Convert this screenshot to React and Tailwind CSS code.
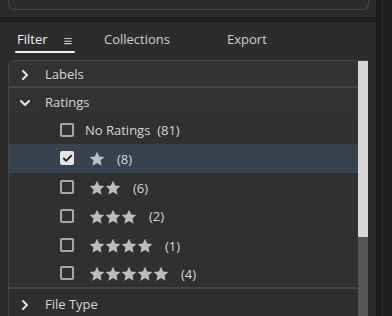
import { ChevronRight, ChevronDown, Check } from "lucide-react"

const Star = () => (
  <svg viewBox="0 0 24 24" className="w-[16px] h-[16px]" fill="#bdbdbd">
    <path d="M12 1l3.3 7.2 7.7.8-5.8 5.2 1.7 7.8L12 18l-6.9 4 1.7-7.8L1 9l7.7-.8z" />
  </svg>
)

const Box = ({ checked }) =>
  checked ? (
    <div className="w-[14px] h-[14px] rounded-[2px] bg-[#e6e6e6] flex items-center justify-center">
      <Check className="w-[11px] h-[11px] text-[#222]" strokeWidth={4} />
    </div>
  ) : (
    <div className="w-[14px] h-[14px] rounded-[2px] border-2 border-[#a8a8a8]" />
  )

const ratings = [
  { stars: 1, count: 8, checked: true, h: "h-[30px]" },
  { stars: 2, count: 6, h: "h-[29px]" },
  { stars: 3, count: 2, h: "h-[30px]" },
  { stars: 4, count: 1, h: "h-[30px]" },
  { stars: 5, count: 4, h: "h-[28px]" },
]

export default function App() {
  return (
    <div
      className="w-[392px] h-[316px] bg-[#1e1e1e] flex overflow-hidden text-[13px] text-[#d6d6d6]"
      style={{ fontFamily: '"Segoe UI", "Open Sans", "Noto Sans", sans-serif' }}
    >
      <div className="w-[376px] flex flex-col">
        {/* top panel (cut off) */}
        <div className="h-[17px] bg-[#2b2b2b] pl-2 pr-[7px]">
          <div className="h-[10px] border-x border-b border-[#454545] rounded-b-[6px] bg-[#2c2c2c]" />
        </div>
        <div className="h-[5px]" />

        {/* filter panel */}
        <div className="flex-1 bg-[#2c2c2c] flex flex-col min-h-0">
          <div className="h-[38px] flex items-start pt-[9px] pl-[15px]">
            <div className="flex flex-col">
              <div className="flex items-center h-[18px] text-[#efefef] text-[13px] pl-[2px]">
                <span>Filter</span>
                <span className="ml-[16px] text-[#c8c8c8] text-[15px] leading-none">≡</span>
              </div>
              <div className="h-[2px] w-[60px] bg-[#f0f0f0] mt-[2px] rounded-full" />
            </div>
            <span className="ml-[29px] text-[13px] text-[#cfcfcf] h-[18px] flex items-center">Collections</span>
            <span className="ml-[57px] text-[13px] text-[#cfcfcf] h-[18px] flex items-center">Export</span>
          </div>

          <div className="flex-1 ml-2 mr-2 flex border-t border-l border-[#454545] rounded-tl-[6px] bg-[#303030] min-h-0">
            <div className="flex-1 flex flex-col">
              <div className="h-[28px] pt-[2px] flex items-center bg-[#323232] border-b-2 border-[#444]">
                <ChevronRight className="w-[16px] h-[16px] ml-[8px] text-[#e6e6e6]" strokeWidth={3} />
                <span className="ml-[12px]">Labels</span>
              </div>
              <div className="h-[28px] pt-[2px] flex items-center bg-[#323232]">
                <ChevronDown className="w-[16px] h-[16px] ml-[8px] text-[#e6e6e6]" strokeWidth={3} />
                <span className="ml-[12px]">Ratings</span>
              </div>
              <div className="h-[29px] flex items-center pl-[51px]">
                <Box />
                <span className="ml-[11px] mt-[2px]">No Ratings&nbsp; (81)</span>
              </div>
              {ratings.map((r) => (
                <div
                  key={r.stars}
                  className={`${r.h} flex items-center pl-[51px] ${r.checked ? "bg-[#374150]" : ""}`}
                >
                  <Box checked={r.checked} />
                  <div className="flex ml-[15px] mt-[2px]">
                    {Array.from({ length: r.stars }).map((_, i) => (
                      <Star key={i} />
                    ))}
                  </div>
                  <span className="ml-[12px] mt-[3px]">({r.count})</span>
                </div>
              ))}
              <div className="h-[2px] bg-[#444]" />
              <div className="h-[28px] pt-[5px] flex items-center bg-[#2e2e2e]">
                <ChevronRight className="w-[16px] h-[16px] ml-[8px] text-[#e6e6e6]" strokeWidth={3} />
                <span className="ml-[12px]">File Type</span>
              </div>
            </div>
            <div className="w-[10px] bg-[#555] flex flex-col">
              <div className="h-[176px] bg-[#d6d6d6]" />
            </div>
          </div>
        </div>
      </div>
      <div className="w-[6px] bg-[#1c1c1c]" />
      <div className="w-px bg-[#2f2f2f]" />
      <div className="flex-1 bg-[#1f1f1f]" />
    </div>
  )
}
